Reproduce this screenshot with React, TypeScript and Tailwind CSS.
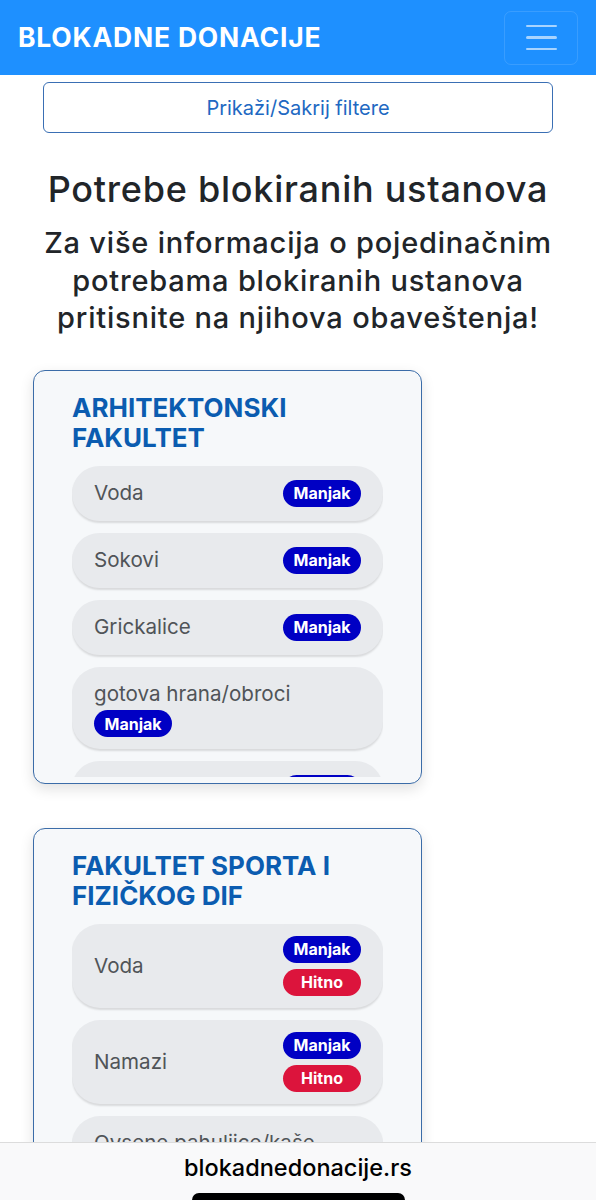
import React from "react";

type Item = { name: string; badges: ("Manjak" | "Hitno")[] };

const cards: { title: string; items: Item[] }[] = [
  {
    title: "ARHITEKTONSKI FAKULTET",
    items: [
      { name: "Voda", badges: ["Manjak"] },
      { name: "Sokovi", badges: ["Manjak"] },
      { name: "Grickalice", badges: ["Manjak"] },
      { name: "gotova hrana/obroci", badges: ["Manjak"] },
      { name: "Kafa", badges: ["Manjak"] },
      { name: "Čaj", badges: ["Manjak"] },
    ],
  },
  {
    title: "FAKULTET SPORTA I FIZIČKOG DIF",
    items: [
      { name: "Voda", badges: ["Manjak", "Hitno"] },
      { name: "Namazi", badges: ["Manjak", "Hitno"] },
      { name: "Ovsene pahuljice/kaše", badges: ["Manjak"] },
      { name: "Sokovi", badges: ["Manjak"] },
    ],
  },
];

function Badge({ kind }: { kind: "Manjak" | "Hitno" }) {
  return (
    <span
      className={
        "inline-flex h-[27px] w-[78px] items-center justify-center rounded-full text-[16px] font-bold leading-none text-white " +
        (kind === "Manjak" ? "bg-[#0000c4]" : "bg-[#dc143c]")
      }
    >
      {kind}
    </span>
  );
}

function ItemRow({ item }: { item: Item }) {
  const multi = item.badges.length > 1;
  return (
    <div
      className={
        "flex flex-wrap items-center justify-between rounded-[28px] bg-[#e8eaed] px-[22px] shadow-[0_2px_2px_rgba(0,0,0,0.12)] " +
        (multi ? "py-[12px]" : "py-[11.5px]")
      }
    >
      <span className="text-[20.6px] leading-[32px] text-[#505458]">{item.name}</span>
      <div className="flex flex-col gap-[6px]">
        {item.badges.map((b, i) => (
          <Badge key={i} kind={b} />
        ))}
      </div>
    </div>
  );
}

function Card({ title, items }: { title: string; items: Item[] }) {
  return (
    <div className="ml-[33px] flex h-[414px] w-[389px] flex-col rounded-[12px] border-[1.5px] border-[#3b6ca8] bg-[#f6f8fa] px-[38px] pb-[6px] pt-[22px] shadow-[0_5px_14px_rgba(0,0,0,0.12)]">
      <h2 className="text-[26px] font-bold leading-[30px] text-[#0b5cb0]">{title}</h2>
      <div className="mt-[13px] flex flex-1 flex-col gap-[12px] overflow-hidden">
        {items.map((it, i) => (
          <ItemRow key={i} item={it} />
        ))}
      </div>
    </div>
  );
}

export default function App() {
  return (
    <div
      className="min-h-[1200px] bg-white"
      style={{ fontFamily: "Inter, 'Noto Sans', 'Liberation Sans', sans-serif" }}
    >
      <header className="flex h-[75px] items-center justify-between bg-[#1e90ff] pl-[18px] pr-[18px]">
        <span className="text-[26.5px] font-bold tracking-[0.8px] text-white">BLOKADNE DONACIJE</span>
        <button className="flex h-[54px] w-[74px] flex-col items-center justify-center gap-[9px] rounded-[7px] border border-[rgba(255,255,255,0.12)]">
          <span className="block h-[2.5px] w-[31px] rounded bg-[#a8d4ff]" />
          <span className="block h-[2.5px] w-[31px] rounded bg-[#a8d4ff]" />
          <span className="block h-[2.5px] w-[31px] rounded bg-[#a8d4ff]" />
        </button>
      </header>

      <div className="px-[43px] pt-[7px]">
        <button className="flex h-[51px] w-full items-center justify-center rounded-[6px] border-[1.5px] border-[#3a6fb4] text-[20px] text-[#2168c2]">
          Prikaži/Sakrij filtere
        </button>
      </div>

      <h1 className="mt-[35px] text-center text-[36px] font-medium leading-[43px] tracking-[0.75px] text-[#212529]">
        Potrebe blokiranih ustanova
      </h1>
      <p className="mt-[13px] text-center text-[29px] font-medium leading-[37.5px] tracking-[0.8px] text-[#212529]">
        Za više informacija o pojedinačnim
        <br />
        potrebama blokiranih ustanova
        <br />
        pritisnite na njihova obaveštenja!
      </p>

      <div className="mt-[33px] flex flex-col gap-[44px] pb-[80px]">
        {cards.map((c, i) => (
          <Card key={i} title={c.title} items={c.items} />
        ))}
      </div>

      <div className="fixed bottom-0 left-0 right-0 flex h-[58px] flex-col items-center border-t border-[#dcdcdc] bg-[#f9f9fa]">
        <span className="mt-[11px] text-[23.5px] font-medium leading-[28px] text-black">blokadnedonacije.rs</span>
        <span className="mt-auto block h-[7px] w-[213px] rounded-t-full bg-black" />
      </div>
    </div>
  );
}
